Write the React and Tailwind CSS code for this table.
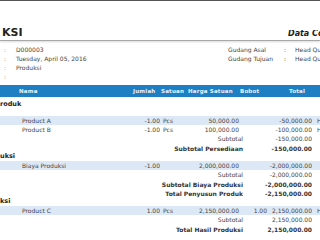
import React from 'react'

const Cell = ({ w, className = '', children }) => (
  <div className={`shrink-0 whitespace-nowrap overflow-hidden ${w} ${className}`}>{children}</div>
)

const ItemRow = ({ name, qty, unit, price, weight, total, extra, band }) => (
  <div className={`flex h-[9px] items-center ${band ? 'bg-[#dde8f6]' : ''}`}>
    <Cell w="w-[125px]" className="pl-[22px]">{name}</Cell>
    <Cell w="w-[35px]" className="text-right">{qty}</Cell>
    <Cell w="w-[25px]" className="pl-[3px]">{unit}</Cell>
    <Cell w="w-[54px]" className="text-right">{price}</Cell>
    <Cell w="w-[28px]" className="text-right">{weight}</Cell>
    <Cell w="w-[45px]" className="text-right">{total}</Cell>
    <Cell w="w-[8px]" className="pl-[5px]">{extra}</Cell>
  </div>
)

const SumRow = ({ label, value, bold }) => (
  <div className={`flex h-[9px] items-center ${bold ? 'font-bold pt-[2px] text-[#333]' : ''}`}>
    <Cell w="w-[243px]" className="text-right">{label}</Cell>
    <Cell w="w-[69px]" className="text-right">{value}</Cell>
  </div>
)

const Heading = ({ children }) => (
  <div className="h-[9px] flex items-center font-bold text-[6.5px] text-[#222]">{children}</div>
)

export default function App() {
  return (
    <div className="w-[320px] h-[240px] overflow-hidden bg-white font-['DejaVu_Sans',sans-serif] text-[6px] text-[#444]">
      <div className="h-px bg-[#555]" />

      <div className="flex items-end h-[40px] pb-[2px] border-b border-[#a8a8a8] shadow-[0_1px_2px_rgba(0,0,0,0.15)]">
        <div className="pl-[2px] text-[11px] font-bold text-[#222] leading-none">KSI</div>
        <div className="ml-auto w-[32px] whitespace-nowrap overflow-hidden text-[8px] font-bold italic text-[#222] leading-none">Data Collection</div>
      </div>

      <div className="flex pt-[4px] h-[44px]">
        <div className="flex flex-col w-[228px]">
          {['D000003', 'Tuesday, April 05, 2016', 'Produksi', ''].map((v, i) => (
            <div key={i} className="flex h-[9px] items-center">
              <span className="w-[16px] pl-[4px] text-[#999]">:</span>
              <span>{v}</span>
            </div>
          ))}
        </div>
        <div className="flex flex-col">
          {['Gudang Asal', 'Gudang Tujuan'].map((v) => (
            <div key={v} className="flex h-[9px] items-center whitespace-nowrap">
              <span className="w-[56px]">{v}</span>
              <span className="w-[11px]">:</span>
              <span className="w-[25px] overflow-hidden">Head Quarter</span>
            </div>
          ))}
        </div>
      </div>

      <div className="flex h-[12px] items-center bg-[#1e7fc2] text-[#e8f2fb] font-bold text-[5.5px] tracking-[0.2px]">
        <div className="w-[133px] pl-[19px]">Nama</div>
        <div className="w-[28px]">Jumlah</div>
        <div className="w-[27px]">Satuan</div>
        <div className="w-[52px]">Harga Satuan</div>
        <div className="w-[49px]">Bobot</div>
        <div>Total</div>
      </div>

      <div className="h-[3px]" />
      <Heading>roduk</Heading>
      <div className="h-[7px]" />
      <ItemRow band name="Product A" qty="-1.00" unit="Pcs" price="50,000.00" total="-50,000.00" extra="H" />
      <ItemRow name="Product B" qty="-1.00" unit="Pcs" price="100,000.00" total="-100,000.00" extra="H" />
      <SumRow label="Subtotal" value="-150,000.00" />
      <SumRow bold label="Subtotal Persediaan" value="-150,000.00" />

      <Heading>uksi</Heading>
      <ItemRow band name="Biaya Produksi" qty="-1.00" price="2,000,000.00" total="-2,000,000.00" />
      <SumRow label="Subtotal" value="-2,000,000.00" />
      <SumRow bold label="Subtotal Biaya Produksi" value="-2,000,000.00" />
      <SumRow bold label="Total Penyusun Produk" value="-2,150,000.00" />

      <Heading>ksi</Heading>
      <ItemRow band name="Product C" qty="1.00" unit="Pcs" price="2,150,000.00" weight="1.00" total="2,150,000.00" extra="H" />
      <SumRow label="Subtotal" value="2,150,000.00" />
      <SumRow bold label="Total Hasil Produksi" value="2,150,000.00" />
    </div>
  )
}
